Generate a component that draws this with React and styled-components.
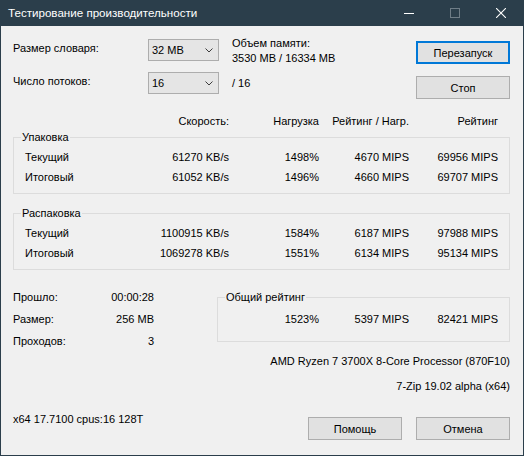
import React from 'react';
import styled, { createGlobalStyle } from 'styled-components';

const GlobalStyle = createGlobalStyle`
  html, body {
    margin: 0;
    padding: 0;
    background: #f0f0f0;
  }
  body {
    font-family: "Liberation Sans", Arial, sans-serif;
    font-size: 11px;
    color: #000;
  }
`;

const cols = ['Скорость:', 'Нагрузка', 'Рейтинг / Нагр.', 'Рейтинг'];

const packRows = [
  ['Текущий', '61270 KB/s', '1498%', '4670 MIPS', '69956 MIPS'],
  ['Итоговый', '61052 KB/s', '1496%', '4660 MIPS', '69707 MIPS'],
];

const unpackRows = [
  ['Текущий', '1100915 KB/s', '1584%', '6187 MIPS', '97988 MIPS'],
  ['Итоговый', '1069278 KB/s', '1551%', '6134 MIPS', '95134 MIPS'],
];

const stats = [
  ['Прошло:', '00:00:28'],
  ['Размер:', '256 MB'],
  ['Проходов:', '3'],
];

const Chevron = () => (
  <svg width="8" height="5" viewBox="0 0 8 5">
    <polyline points="0.5,0.5 4,4 7.5,0.5" fill="none" stroke="#3c3c3c" strokeWidth="1" />
  </svg>
);

const Combo = ({ value }) => (
  <ComboBox>
    <span>{value}</span>
    <Chevron />
  </ComboBox>
);

const Group = ({ title, children }) => (
  <Frame>
    <Legend>{title}</Legend>
    {children}
  </Frame>
);

const App = () => {
  return (
    <>
      <GlobalStyle />
      <Window>
        <TitleBar>
          <Title>Тестирование производительности</Title>
          <Caption>
            <CaptionButton>
              <svg width="10" height="10" viewBox="0 0 10 10">
                <line x1="0" y1="5.5" x2="10" y2="5.5" stroke="#fff" strokeWidth="1" />
              </svg>
            </CaptionButton>
            <CaptionButton>
              <svg width="10" height="10" viewBox="0 0 10 10">
                <rect x="0.5" y="0.5" width="9" height="9" fill="none" stroke="#6f7d87" strokeWidth="1" />
              </svg>
            </CaptionButton>
            <CaptionButton>
              <svg width="10" height="10" viewBox="0 0 10 10">
                <path d="M0 0 L10 10 M10 0 L0 10" stroke="#fff" strokeWidth="1.1" />
              </svg>
            </CaptionButton>
          </Caption>
        </TitleBar>

        <Client>
          <TopGrid>
            <FieldLabel>Размер словаря:</FieldLabel>
            <Combo value="32 MB" />
            <Memory>
              <div>Объем памяти:</div>
              <div>3530 MB / 16334 MB</div>
            </Memory>
            <Button $default $top={2}>Перезапуск</Button>

            <FieldLabel>Число потоков:</FieldLabel>
            <Combo value="16" />
            <Threads>/ 16</Threads>
            <Button $top={4}>Стоп</Button>
          </TopGrid>

          <HeaderRow>
            <span />
            {cols.map((c) => (
              <Cell key={c}>{c}</Cell>
            ))}
          </HeaderRow>

          <Group title="Упаковка">
            {packRows.map((r) => (
              <DataRow key={r[0]}>
                <Name>{r[0]}</Name>
                {r.slice(1).map((v, i) => (
                  <Cell key={i}>{v}</Cell>
                ))}
              </DataRow>
            ))}
          </Group>

          <Spacer />

          <Group title="Распаковка">
            {unpackRows.map((r) => (
              <DataRow key={r[0]}>
                <Name>{r[0]}</Name>
                {r.slice(1).map((v, i) => (
                  <Cell key={i}>{v}</Cell>
                ))}
              </DataRow>
            ))}
          </Group>

          <Bottom>
            <Stats>
              {stats.map(([k, v]) => (
                <React.Fragment key={k}>
                  <StatLabel>{k}</StatLabel>
                  <StatValue>{v}</StatValue>
                </React.Fragment>
              ))}
            </Stats>
            <TotalFrame>
              <Legend>Общий рейтинг</Legend>
              <TotalRow>
                <Cell>1523%</Cell>
                <Cell>5397 MIPS</Cell>
                <Cell>82421 MIPS</Cell>
              </TotalRow>
            </TotalFrame>
          </Bottom>

          <InfoLine $gap={1}>AMD Ryzen 7 3700X 8-Core Processor (870F10)</InfoLine>
          <InfoLine $gap={9}>7-Zip 19.02 alpha (x64)</InfoLine>

          <Footer>
            <Build>x64 17.7100 cpus:16 128T</Build>
            <FooterButtons>
              <Button>Помощь</Button>
              <Button>Отмена</Button>
            </FooterButtons>
          </Footer>
        </Client>
      </Window>
    </>
  );
};

const Window = styled.div`
  width: 524px;
  height: 456px;
  box-sizing: border-box;
  border: 1px solid #2b3e4b;
  border-top: none;
  background: #f0f0f0;
  display: flex;
  flex-direction: column;
`;

const TitleBar = styled.div`
  height: 26px;
  margin: 0 -1px;
  background: #2b3e4b;
  color: #fff;
  display: flex;
  align-items: center;
  font-size: 11.6px;
`;

const Title = styled.div`
  padding-left: 8px;
  line-height: 16px;
`;

const Caption = styled.div`
  margin-left: auto;
  display: flex;
  height: 100%;
`;

const CaptionButton = styled.div`
  width: 46px;
  height: 100%;
  display: flex;
  align-items: center;
  justify-content: center;
`;

const Client = styled.div`
  flex: 1;
  padding: 13px 13px 0 12px;
  display: flex;
  flex-direction: column;
`;

const TopGrid = styled.div`
  display: grid;
  grid-template-columns: 135px 71px 1fr 94px;
  grid-template-rows: 22px 22px;
  row-gap: 11px;
`;

const FieldLabel = styled.div`
  line-height: 16px;
  margin-top: 1px;
`;

const ComboBox = styled.div`
  box-sizing: border-box;
  height: 22px;
  border: 1px solid #adadad;
  background: #e5e5e5;
  padding: 0 5px 0 3px;
  display: flex;
  align-items: center;
  justify-content: space-between;
  line-height: 16px;
`;

const Memory = styled.div`
  padding-left: 13px;
  margin-top: -3px;
  line-height: 15px;
`;

const Threads = styled.div`
  padding-left: 13px;
  align-self: center;
  line-height: 16px;
`;

const Button = styled.div`
  box-sizing: border-box;
  width: 94px;
  height: 23px;
  margin-top: ${(p) => p.$top || 0}px;
  background: #e1e1e1;
  border: ${(p) => (p.$default ? '2px solid #0078d7' : '1px solid #adadad')};
  display: flex;
  align-items: center;
  justify-content: center;
  line-height: 16px;
`;

const HeaderRow = styled.div`
  margin-top: 19px;
  padding-left: 12px;
  display: grid;
  grid-template-columns: 104px 100px 90px 90px 89px;
  line-height: 16px;
`;

const Cell = styled.div`
  text-align: right;
  white-space: nowrap;
`;

const Frame = styled.fieldset`
  margin: 0;
  min-width: 0;
  padding: 2px 11px 6px;
  border: 1px solid #dcdcdc;
`;

const Legend = styled.legend`
  margin-left: -4px;
  padding: 0 1px;
  line-height: 16px;
`;

const DataRow = styled.div`
  display: grid;
  grid-template-columns: 104px 100px 90px 90px 89px;
  line-height: 20px;
`;

const Name = styled.div`
  white-space: nowrap;
`;

const Spacer = styled.div`
  height: 11px;
`;

const Bottom = styled.div`
  margin-top: 16px;
  display: flex;
  align-items: flex-start;
`;

const Stats = styled.div`
  width: 141px;
  display: grid;
  grid-template-columns: 70px 71px;
  grid-auto-rows: 22px;
  line-height: 22px;
`;

const StatLabel = styled.div``;

const StatValue = styled.div`
  text-align: right;
`;

const TotalFrame = styled(Frame)`
  flex: 1;
  margin-left: 63px;
  margin-top: 3px;
  padding: 4px 11px 12px;
`;

const TotalRow = styled.div`
  display: grid;
  grid-template-columns: 90px 90px 89px;
  line-height: 20px;
`;

const InfoLine = styled.div`
  margin-top: ${(p) => p.$gap}px;
  text-align: right;
  line-height: 16px;
`;

const Footer = styled.div`
  margin-top: 23px;
  display: flex;
  align-items: flex-start;
`;

const Build = styled.div`
  flex: 1;
  margin-top: -6px;
  line-height: 16px;
`;

const FooterButtons = styled.div`
  display: flex;
  gap: 14px;
`;

export default App;
